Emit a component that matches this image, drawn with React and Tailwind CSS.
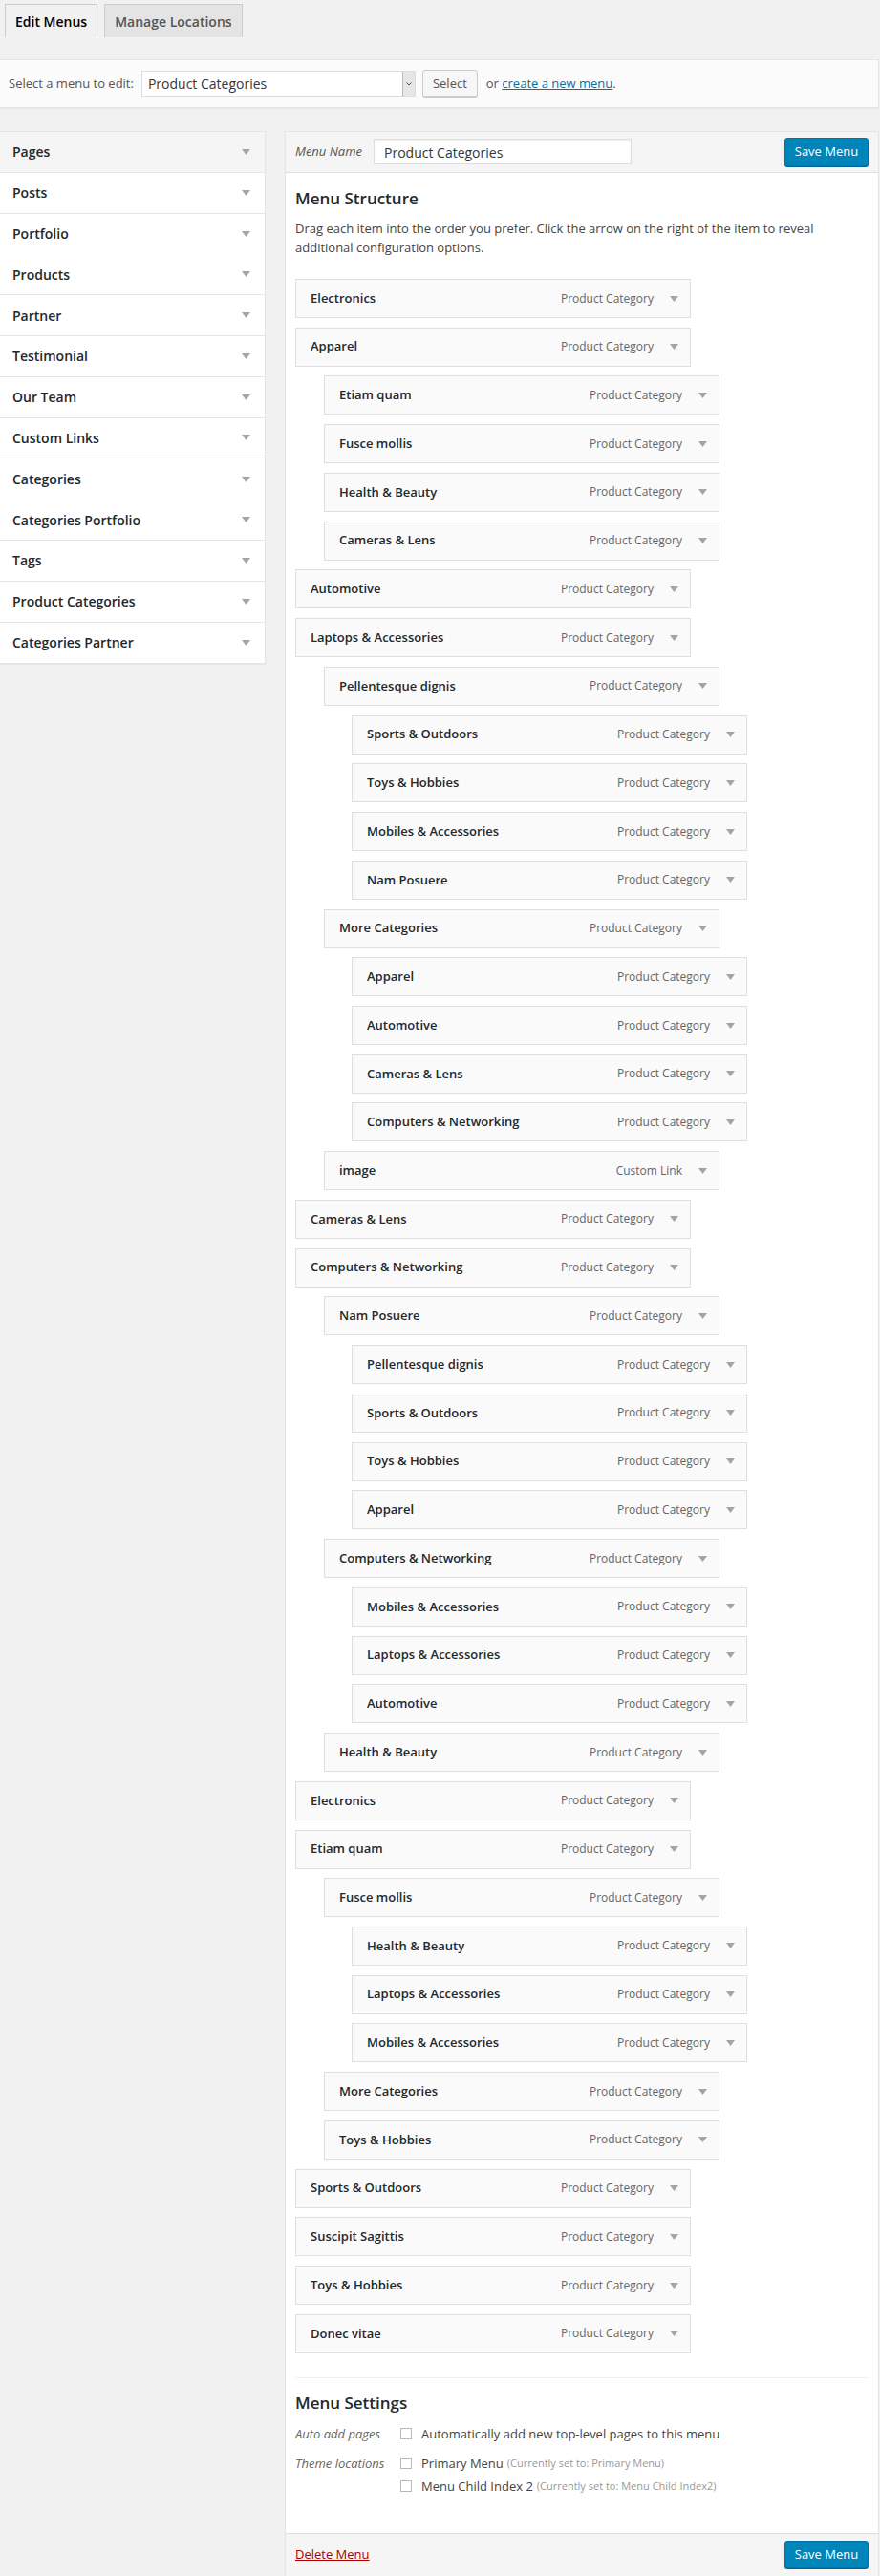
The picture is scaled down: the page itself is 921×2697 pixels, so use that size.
import React from 'react';

const sideBoxes = [
  { label: 'Pages', open: true },
  { label: 'Posts' },
  { label: 'Portfolio', noLine: true },
  { label: 'Products' },
  { label: 'Partner' },
  { label: 'Testimonial' },
  { label: 'Our Team' },
  { label: 'Custom Links' },
  { label: 'Categories', noLine: true },
  { label: 'Categories Portfolio' },
  { label: 'Tags' },
  { label: 'Product Categories' },
  { label: 'Categories Partner', last: true },
];

// [title, depth, type]
const menuItems = [
  ['Electronics', 0],
  ['Apparel', 0],
  ['Etiam quam', 1],
  ['Fusce mollis', 1],
  ['Health & Beauty', 1],
  ['Cameras & Lens', 1],
  ['Automotive', 0],
  ['Laptops & Accessories', 0],
  ['Pellentesque dignis', 1],
  ['Sports & Outdoors', 2],
  ['Toys & Hobbies', 2],
  ['Mobiles & Accessories', 2],
  ['Nam Posuere', 2],
  ['More Categories', 1],
  ['Apparel', 2],
  ['Automotive', 2],
  ['Cameras & Lens', 2],
  ['Computers & Networking', 2],
  ['image', 1, 'Custom Link'],
  ['Cameras & Lens', 0],
  ['Computers & Networking', 0],
  ['Nam Posuere', 1],
  ['Pellentesque dignis', 2],
  ['Sports & Outdoors', 2],
  ['Toys & Hobbies', 2],
  ['Apparel', 2],
  ['Computers & Networking', 1],
  ['Mobiles & Accessories', 2],
  ['Laptops & Accessories', 2],
  ['Automotive', 2],
  ['Health & Beauty', 1],
  ['Electronics', 0],
  ['Etiam quam', 0],
  ['Fusce mollis', 1],
  ['Health & Beauty', 2],
  ['Laptops & Accessories', 2],
  ['Mobiles & Accessories', 2],
  ['More Categories', 1],
  ['Toys & Hobbies', 1],
  ['Sports & Outdoors', 0],
  ['Suscipit Sagittis', 0],
  ['Toys & Hobbies', 0],
  ['Donec vitae', 0],
];

const indent = { 0: 'ml-0', 1: 'ml-[30px]', 2: 'ml-[59px]' };

const Arrow = ({ className = '' }) => (
  <svg width="9" height="6" viewBox="0 0 9 6" className={className}>
    <polygon points="0,0 9,0 4.5,6" fill="#a0a5aa" />
  </svg>
);

const Checkbox = () => (
  <span className="inline-block h-[12px] w-[12px] shrink-0 border border-[#b4b9be] bg-white" />
);

const SaveButton = () => (
  <button className="h-[29px] w-[88px] rounded-[3px] border border-[#0073aa] bg-[#0085ba] text-[13px] text-white shadow-[0_1px_0_#006799]">
    Save Menu
  </button>
);

export default function App() {
  return (
    <div className="h-[2697px] w-[921px] overflow-hidden bg-[#f1f1f1] font-['Open_Sans',sans-serif] text-[13px] text-[#444]">
      {/* Tabs */}
      <div className="flex gap-[7px] pl-[5px] pt-[4px]">
        <div className="flex h-[35px] items-center border border-b-0 border-[#ccc] bg-[#f1f1f1] px-[10px] text-[14px] font-semibold text-black">
          Edit Menus
        </div>
        <div className="flex h-[35px] items-center border border-b-0 border-[#ccc] bg-[#e4e4e4] px-[10px] text-[14px] font-semibold text-[#555]">
          Manage Locations
        </div>
      </div>

      {/* Menu selector bar */}
      <div className="mt-[23px] flex h-[51px] w-[920px] items-center border border-l-0 border-[#e5e5e5] bg-[#fbfbfb] pl-[9px] shadow-[0_1px_1px_rgba(0,0,0,0.04)]">
        <span className="text-[13px] text-[#555]">Select a menu to edit:</span>
        <div className="ml-[8px] flex h-[28px] w-[287px] items-stretch border border-[#ddd] bg-white">
          <span className="flex-1 pl-[6px] text-[14px] leading-[26px] text-[#32373c]">Product Categories</span>
          <span className="flex w-[13px] items-center justify-center border-l border-[#bbb] bg-[#e6e6e6]">
            <svg width="6" height="4" viewBox="0 0 6 4">
              <polyline points="0.5,0.5 3,3 5.5,0.5" fill="none" stroke="#555" strokeWidth="1" />
            </svg>
          </span>
        </div>
        <button className="ml-[7px] h-[29px] rounded-[3px] border border-[#ccc] bg-[#f7f7f7] px-[10px] text-[13px] text-[#555] shadow-[0_1px_0_#ccc]">
          Select
        </button>
        <span className="ml-[9px] text-[13px] text-[#555]">
          or <a className="text-[#0073aa] underline">create a new menu</a>.
        </span>
      </div>

      {/* Main columns */}
      <div className="mt-[24px] flex items-start">
        {/* Left: add items */}
        <div className="w-[278px] border border-l-0 border-[#e5e5e5] bg-white shadow-[0_1px_1px_rgba(0,0,0,0.04)]">
          {sideBoxes.map((b) => (
            <div
              key={b.label}
              className={`flex h-[42.8px] items-center justify-between pl-[13px] pr-[15px] text-[14px] font-semibold text-[#23282d] ${
                b.open ? 'bg-[#f5f5f5]' : 'bg-white'
              } ${b.noLine || b.last ? '' : 'border-b border-[#e5e5e5]'}`}
            >
              <span>{b.label}</span>
              <Arrow />
            </div>
          ))}
        </div>

        {/* Right: menu management */}
        <div className="ml-[20px] w-[622px] border border-[#e5e5e5] bg-white shadow-[0_1px_1px_rgba(0,0,0,0.04)]">
          <div className="flex h-[43px] items-center justify-between border-b border-[#dfdfdf] bg-[#f5f5f5] pl-[10px] pr-[10px]">
            <div className="flex items-center">
              <span className="text-[13px] italic text-[#555]">Menu Name</span>
              <div className="ml-[12px] flex h-[26px] w-[270px] items-center border border-[#ddd] bg-white pl-[10px] text-[14px] text-[#32373c] shadow-[inset_0_1px_2px_rgba(0,0,0,0.07)]">
                Product Categories
              </div>
            </div>
            <SaveButton />
          </div>

          <div className="px-[10px]">
            <h3 className="pt-[15px] text-[17px] font-semibold leading-[24px] text-[#23282d]">Menu Structure</h3>
            <p className="mt-[9px] w-[590px] text-[13px] leading-[20px] text-[#444]">
              Drag each item into the order you prefer. Click the arrow on the right of the item to reveal additional configuration options.
            </p>

            <ul className="mt-[23px] flex flex-col gap-[9.74px]">
              {menuItems.map(([title, depth, type], i) => (
                <li
                  key={i}
                  className={`flex h-[41px] w-[414px] items-center border border-[#dfdfdf] bg-[#fafafa] pl-[15px] pr-[12px] ${indent[depth]}`}
                >
                  <span className="flex-1 text-[13px] font-semibold text-[#23282d]">{title}</span>
                  <span className="text-[12px] text-[#666]">{type || 'Product Category'}</span>
                  <Arrow className="ml-[17px]" />
                </li>
              ))}
            </ul>

            {/* Menu settings */}
            <div className="mt-[25px] h-[163px] border-t border-[#eee]">
              <h3 className="pt-[14px] text-[17px] font-semibold leading-[24px] text-[#23282d]">Menu Settings</h3>
              <div className="mt-[10px] flex items-center leading-[20px]">
                <span className="w-[110px] text-[13px] italic text-[#666]">Auto add pages</span>
                <Checkbox />
                <span className="ml-[10px] text-[13px] text-[#444]">Automatically add new top-level pages to this menu</span>
              </div>
              <div className="mt-[11px] flex items-start leading-[20px]">
                <span className="w-[110px] text-[13px] italic text-[#666]">Theme locations</span>
                <div className="flex flex-col gap-[4px]">
                  <div className="flex items-center">
                    <Checkbox />
                    <span className="ml-[10px] text-[13px] text-[#444]">Primary Menu</span>
                    <span className="ml-[4px] text-[11px] text-[#999]">(Currently set to: Primary Menu)</span>
                  </div>
                  <div className="flex items-center">
                    <Checkbox />
                    <span className="ml-[10px] text-[13px] text-[#444]">Menu Child Index 2</span>
                    <span className="ml-[4px] text-[11px] text-[#999]">(Currently set to: Menu Child Index2)</span>
                  </div>
                </div>
              </div>
            </div>
          </div>

          <div className="flex h-[45px] items-center justify-between border-t border-[#dfdfdf] bg-[#f5f5f5] px-[10px]">
            <a className="text-[13px] text-[#a00] underline">Delete Menu</a>
            <SaveButton />
          </div>
        </div>
      </div>
    </div>
  );
}
